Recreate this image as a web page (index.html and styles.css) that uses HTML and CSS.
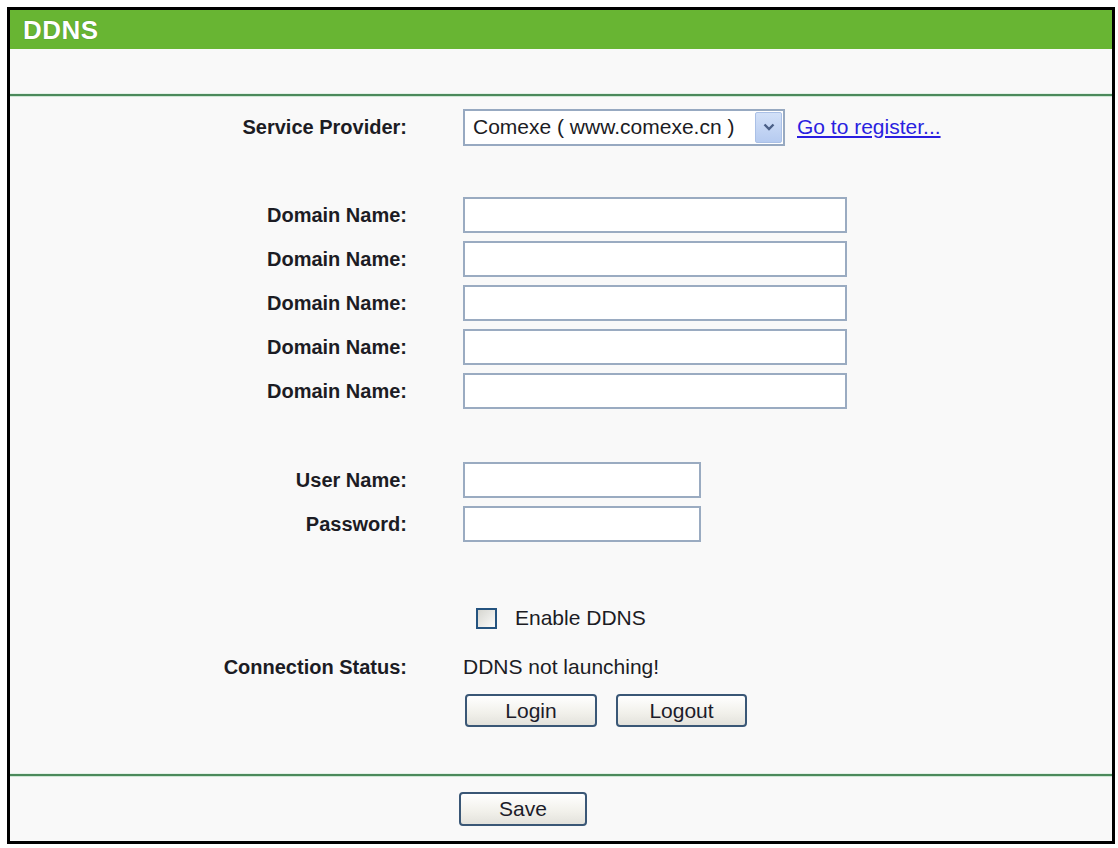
FILE: index.html
```html
<!DOCTYPE html>
<html lang="en">
<head>
<meta charset="utf-8">
<title>DDNS</title>
<link rel="stylesheet" href="styles.css">
</head>
<body>
<div class="frame">
  <div class="title">DDNS</div>
  <div class="band"></div>
  <div class="rule"></div>
  <div class="content">
    <div class="row">
      <div class="label">Service Provider:</div>
      <div class="value">
        <div class="select">
          <span class="select-text">Comexe ( www.comexe.cn )</span>
          <span class="select-arrow">
            <svg width="12" height="8" viewBox="0 0 12 8"><path d="M1.5 1.5 L6 6 L10.5 1.5" fill="none" stroke="#4a5f86" stroke-width="2.4"/></svg>
          </span>
        </div>
        <a class="link" href="#">Go to register...</a>
      </div>
    </div>
    <div class="spacer s44"></div>
    <div class="row"><div class="label">Domain Name:</div><div class="value"><input class="text wide" type="text"></div></div>
    <div class="row"><div class="label">Domain Name:</div><div class="value"><input class="text wide" type="text"></div></div>
    <div class="row"><div class="label">Domain Name:</div><div class="value"><input class="text wide" type="text"></div></div>
    <div class="row"><div class="label">Domain Name:</div><div class="value"><input class="text wide" type="text"></div></div>
    <div class="row"><div class="label">Domain Name:</div><div class="value"><input class="text wide" type="text"></div></div>
    <div class="spacer s45"></div>
    <div class="row"><div class="label">User Name:</div><div class="value"><input class="text narrow" type="text"></div></div>
    <div class="row"><div class="label">Password:</div><div class="value"><input class="text narrow" type="password"></div></div>
    <div class="spacer s50"></div>
    <div class="row">
      <div class="label"></div>
      <div class="value check-line"><input class="check" type="checkbox"><span class="plain">Enable DDNS</span></div>
    </div>
    <div class="spacer s5"></div>
    <div class="row">
      <div class="label">Connection Status:</div>
      <div class="value"><span class="plain">DDNS not launching!</span></div>
    </div>
    <div class="buttons">
      <button class="btn login" type="button">Login</button>
      <button class="btn logout" type="button">Logout</button>
    </div>
  </div>
  <div class="rule"></div>
  <div class="footer">
    <button class="btn save" type="button">Save</button>
  </div>
</div>
</body>
</html>
```
FILE: styles.css
```css
html, body {
  background: #ffffff;
}
body {
  margin: 7px 3px 4px 7px;
  font-family: "Liberation Sans", Arial, sans-serif;
  color: #1c1c24;
}
.frame {
  border: 3px solid #000;
  height: 831px;
  background: #f9f9f9;
  display: flex;
  flex-direction: column;
}
.title {
  height: 39px;
  line-height: 40px;
  background: #68b533;
  color: #ffffff;
  font-weight: bold;
  font-size: 26px;
  letter-spacing: 0.5px;
  padding-left: 13px;
  text-shadow: 0 0 1px rgba(30, 70, 20, 0.6);
}
.band {
  height: 45px;
}
.rule {
  height: 2px;
  background: #4c8a5c;
  box-shadow: 0 1px 0 #cfe8d6, 0 -1px 0 #e4f2e8;
}
.content {
  height: 678px;
  padding-top: 9px;
  box-sizing: border-box;
}
.row {
  height: 44px;
  display: grid;
  grid-template-columns: 397px 1fr;
  column-gap: 56px;
  align-items: center;
}
.label {
  text-align: right;
  font-weight: bold;
  font-size: 20px;
}
.value {
  display: flex;
  align-items: center;
}
.spacer.s44 { height: 44px; }
.spacer.s45 { height: 45px; }
.spacer.s50 { height: 50px; }
.spacer.s5 { height: 5px; }
.plain {
  font-size: 21px;
}
.select {
  width: 322px;
  height: 37px;
  box-sizing: border-box;
  border: 2px solid #97a9c1;
  background: #ffffff;
  display: flex;
  align-items: center;
  justify-content: space-between;
  padding: 1px 1px 1px 8px;
  font-size: 21px;
}
.select-text {
  white-space: nowrap;
}
.select-arrow {
  width: 27px;
  height: 100%;
  box-sizing: border-box;
  background: linear-gradient(#d3e1f8, #b6cbf0);
  border: 1px solid #aac0e6;
  border-radius: 2px;
  display: flex;
  align-items: center;
  justify-content: center;
}
.link {
  margin-left: 12px;
  font-size: 21px;
  color: #2a1fe0;
  text-decoration: underline;
}
.text {
  height: 36px;
  box-sizing: border-box;
  border: 2px solid #9aabc1;
  background: #ffffff;
  margin: 0;
  padding: 0 6px;
  font-size: 20px;
  font-family: inherit;
}
.text.wide { width: 384px; }
.text.narrow { width: 238px; }
.check-line {
  padding-left: 13px;
}
.check {
  appearance: none;
  -webkit-appearance: none;
  width: 21px;
  height: 21px;
  margin: 0 18px 0 0;
  box-sizing: border-box;
  border: 2px solid #24537f;
  background: linear-gradient(135deg, #d6d6d0, #fbfbfa);
}
.buttons {
  display: flex;
  gap: 19px;
  margin-top: 5px;
  padding-left: 455px;
}
.btn {
  height: 33px;
  box-sizing: border-box;
  border: 2px solid #3a5776;
  border-radius: 4px;
  background: linear-gradient(#ffffff, #f1f0ea 60%, #e3e2dc);
  font-family: inherit;
  font-size: 21px;
  color: #1c1c2a;
  padding: 0;
  margin: 0;
}
.btn.login { width: 132px; }
.btn.logout { width: 131px; }
.footer {
  flex: 1;
  padding-top: 16px;
  padding-left: 449px;
}
.btn.save {
  width: 128px;
  height: 34px;
}
```
